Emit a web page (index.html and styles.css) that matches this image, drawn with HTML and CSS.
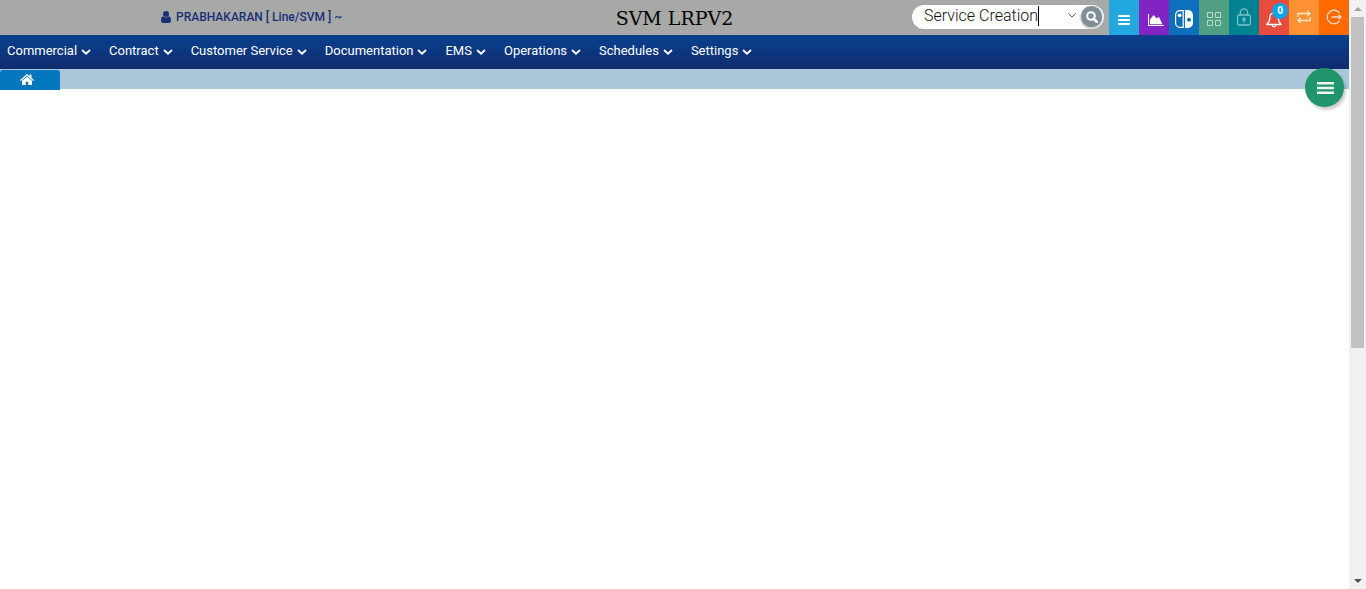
FILE: index.html
```html
<!DOCTYPE html>
<html lang="en">
<head>
<meta charset="utf-8">
<title>SVM LRPV2</title>
<link rel="stylesheet" href="styles.css">
</head>
<body>
<svg class="defs" width="0" height="0" aria-hidden="true">
  <symbol id="chev" viewBox="0 0 10 6"><path d="M1 1l4 3.6L9 1" fill="none" stroke="currentColor" stroke-width="1.9"/></symbol>
</svg>
<div class="shell">
  <div class="app">
    <header class="topbar">
      <div class="user">
        <svg width="10" height="12" viewBox="0 0 10 12" fill="currentColor"><circle cx="5" cy="3" r="3"/><path d="M2 5.2C.5 5.6 0 7.2 0 9.5 0 11 .8 12 2.200 12h5.600C9.200 12 10 11 10 9.500c0-2.300-.5-3.900-2-4.300a4.200 4.200 0 0 1-6 0z"/></svg>
        <span>PRABHAKARAN [ Line/SVM ] ~</span>
      </div>
      <h1 class="title">SVM LRPV2</h1>
      <div class="tools">
        <div class="search">
          <input class="search-input" type="text" value="Service Creation" aria-label="Search screen">
          <button class="drop" type="button" aria-label="Show options"><svg width="8" height="5" viewBox="0 0 8 5"><path d="M.5.5L4 4 7.500.5" fill="none" stroke="#555" stroke-width="1"/></svg></button>
          <button class="go" type="button" aria-label="Search"><svg width="12" height="12" viewBox="0 0 12 12" fill="none" stroke="#fff" stroke-width="2"><circle cx="5" cy="5" r="3.800"/><path d="M7.800 7.800L11 11" stroke-width="2.600" stroke-linecap="round"/></svg></button>
        </div>
        <button class="tile sky low" type="button" aria-label="Menu"><svg width="12" height="12" viewBox="0 0 12 12" fill="#fff"><path d="M0 1h12v2H0zM0 5h12v2H0zM0 9h12v2H0z"/></svg></button>
        <button class="tile purple low" type="button" aria-label="Charts"><svg width="16" height="12" viewBox="0 0 16 12"><path d="M.5 0v11.500H16" fill="none" stroke="#fff" stroke-width="1.200"/><path d="M2 10.200V5.500L5.500 1l3 3.200 2.500-1.200 3.500 7.200z" fill="#fff"/></svg></button>
        <button class="tile blue" type="button" aria-label="Switch"><svg width="18" height="18" viewBox="0 0 18 18"><path d="M8.200.6H5A4.400 4.400 0 0 0 .6 5v8A4.400 4.400 0 0 0 5 17.400h3.200z" fill="none" stroke="#fff" stroke-width="1.200"/><circle cx="4.600" cy="5.300" r="1.900" fill="#fff"/><path fill-rule="evenodd" d="M10 0h3a5 5 0 0 1 5 5v8a5 5 0 0 1-5 5h-3zM14 7.700a2 2 0 1 0 .01 4 2 2 0 0 0-.01-4z" fill="#fff"/></svg></button>
        <button class="tile green" type="button" aria-label="Grid"><svg width="14" height="14" viewBox="0 0 14 14" fill="none" stroke="#b9dbc9"><path d="M.5.5h5v5h-5zM8.500.5h5v5h-5zM.5 8.500h5v5h-5zM8.500 8.500h5v5h-5z"/></svg></button>
        <button class="tile teal" type="button" aria-label="Lock"><svg width="14" height="18" viewBox="0 0 14 18" fill="none" stroke="#7cc3c7" stroke-width="1.300"><rect x=".6" y="7" width="12.800" height="10" rx="1.500"/><path d="M3.300 7V4.500a3.700 3.700 0 0 1 7.400 0V7M7 12v2.500"/><circle cx="7" cy="11" r="1.200"/></svg></button>
        <button class="tile red low" type="button" aria-label="Notifications"><svg width="16" height="17" viewBox="0 0 16 17" fill="none" stroke="#fff" stroke-width="1.300" stroke-linejoin="round"><path d="M8 2C5.200 2 3.800 4 3.800 6.500c0 3.500-1 5.300-3 7h14.400c-2-1.700-3-3.500-3-7C12.200 4 10.800 2 8 2zM8 0v2M6.200 14a1.800 1.800 0 0 0 3.600 0"/></svg><span class="badge">0</span></button>
        <button class="tile amber" type="button" aria-label="Switch user"><svg width="14" height="14" viewBox="0 0 14 14" fill="none" stroke="#ffe5c6" stroke-width="1.300"><path d="M.8 7V3.500h12M10.300 1l2.700 2.500L10.300 6M13.200 7v3.500h-12M3.700 8L1 10.500 3.700 13"/></svg></button>
        <button class="tile orange" type="button" aria-label="Log out"><svg width="16" height="16" viewBox="0 0 16 16" fill="none" stroke="#ffe0c8" stroke-width="1.300"><path d="M13.600 4.200a6.800 6.800 0 1 0 0 7.600M5.500 8h9.500M12.500 5.800L15 8l-2.500 2.200"/></svg></button>
      </div>
    </header>
    <nav class="menu">
      <a href="#">Commercial<svg width="10" height="6"><use href="#chev"/></svg></a>
      <a href="#">Contract<svg width="10" height="6"><use href="#chev"/></svg></a>
      <a href="#">Customer Service<svg width="10" height="6"><use href="#chev"/></svg></a>
      <a href="#">Documentation<svg width="10" height="6"><use href="#chev"/></svg></a>
      <a href="#">EMS<svg width="10" height="6"><use href="#chev"/></svg></a>
      <a href="#">Operations<svg width="10" height="6"><use href="#chev"/></svg></a>
      <a href="#">Schedules<svg width="10" height="6"><use href="#chev"/></svg></a>
      <a href="#">Settings<svg width="10" height="6"><use href="#chev"/></svg></a>
    </nav>
    <div class="tabs">
      <a class="home" href="#" aria-label="Home"><svg width="14" height="11" viewBox="0 0 14 11" fill="#fff"><path d="M7 0l2.600 2.200V.6h1.900v3.200L14 6l-.8.9L7 1.700.8 6.900 0 6z"/><path d="M2 6.800l5-4.100 5 4.100V11H8.200V7.700H5.800V11H2z"/></svg></a>
      <button class="fab" type="button" aria-label="Quick menu"><svg width="17" height="12" viewBox="0 0 17 12" fill="#e8f4ee"><path d="M0 0h17v2.400H0zM0 4.800h17v2.400H0zM0 9.600h17V12H0z"/></svg></button>
    </div>
    <main class="content"></main>
  </div>
  <div class="scroll" aria-hidden="true">
    <div class="arrow"><svg width="8" height="4" viewBox="0 0 8 4"><path d="M0 4l4-4 4 4z" fill="#a3a3a3"/></svg></div>
    <div class="track"><div class="thumb"></div></div>
    <div class="arrow"><svg width="8" height="4" viewBox="0 0 8 4"><path d="M0 0l4 4 4-4z" fill="#505050"/></svg></div>
  </div>
</div>
</body>
</html>
```
FILE: styles.css
```css
* { box-sizing: border-box; }
body { margin: 0; background: #fff; font-family: Roboto, "Liberation Sans", sans-serif; font-size: 13px; }
button { border: 0; padding: 0; font: inherit; cursor: pointer; }
svg { display: block; flex: none; }
.defs { position: absolute; }
.shell { display: flex; min-height: 100vh; }
.app { flex: 1; display: flex; flex-direction: column; min-width: 0; }
.topbar { display: grid; grid-template-columns: 1fr auto 1fr; align-items: center; height: 35px; background: #a7a9a6; }
.user { display: flex; align-items: center; gap: 5px; padding: 0 0 1px 161px; color: #1a2f78; font-size: 12px; font-weight: 500; white-space: nowrap; }
.title { margin: 0; font: 400 19px/24px "DejaVu Serif", serif; color: #000; white-space: nowrap; }
.tools { display: flex; align-items: center; justify-content: flex-end; }
.search { display: flex; align-items: center; width: 192px; height: 24px; margin: 0 5px 2px 0; padding: 0 2px 0 12px; border-radius: 12px; background: #fff; }
.search-input { field-sizing: content; height: 20px; margin-bottom: 2px; padding: 0; border: 0; border-right: 1px solid #000; outline: 0; background: none; color: #111; font: 300 16px/20px Roboto, sans-serif; }
.drop { display: grid; place-items: center; width: 16px; height: 20px; margin: 0 1px 2px auto; background: none; }
.go { display: grid; place-items: center; width: 21px; height: 21px; border-radius: 50%; background: #7f8f97; box-shadow: 0 1px 3px #999; }
.tile { position: relative; display: grid; place-items: center; width: 30px; height: 35px; }
.low { padding-top: 4px; }
.sky { background: #22a7de; }
.purple { background: #8224c4; padding-left: 3px; }
.blue { background: #0e70bb; padding-top: 2px; }
.green { background: #509e83; padding-top: 2px; }
.teal { background: #008292; }
.red { background: #e94b3d; }
.amber { background: #ff9232; }
.orange { background: #ff6a00; }
.teal, .amber, .orange { padding-bottom: 2px; }
.badge { position: absolute; top: 3px; right: 1px; width: 16px; height: 16px; border-radius: 50%; background: #08a5ec; color: #fff; font-size: 10px; font-weight: 700; line-height: 16px; text-align: center; }
.menu { display: flex; gap: 18px; height: 34px; padding: 0 7px; background: linear-gradient(#08408e, #102c6e); }
.menu a { display: flex; align-items: center; gap: 4px; height: 31px; color: #fff; font-weight: 400; text-decoration: none; white-space: nowrap; }
.menu svg { margin-top: 2px; }
.tabs { position: relative; display: flex; height: 20px; background: #aac7d9; }
.home { display: flex; align-items: center; width: 60px; height: 20px; margin-top: 1px; padding: 0 0 2px 20px; border-radius: 3px 3px 0 0; background: #0277bd; }
.fab { position: absolute; top: -1px; right: 5px; display: grid; place-items: center; width: 39px; height: 39px; padding-left: 2px; border-radius: 50%; background: #20956c; box-shadow: 2px 3px 3px rgba(0, 0, 0, .2); }
.content { flex: 1; }
.scroll { display: flex; flex-direction: column; width: 17px; background: #f1f1f1; }
.arrow { display: grid; place-items: center; height: 17px; }
.track { flex: 1; padding: 0 2px; }
.thumb { height: 331px; background: #c1c1c1; }
```
